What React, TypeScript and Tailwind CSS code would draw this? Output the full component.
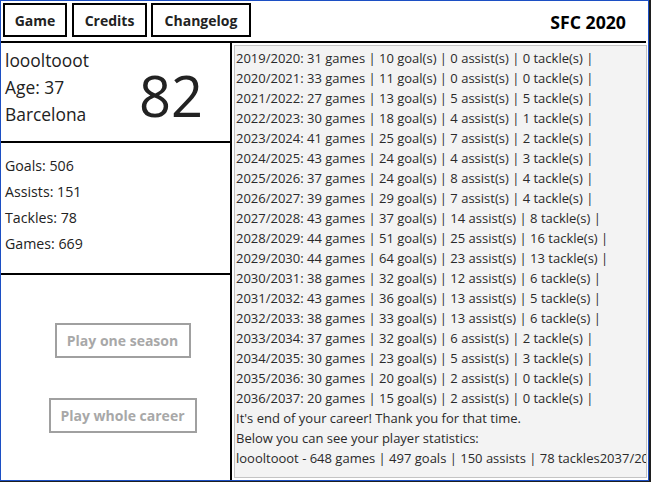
const seasons = [
  "2019/2020: 31 games | 10 goal(s) | 0 assist(s) | 0 tackle(s) |",
  "2020/2021: 33 games | 11 goal(s) | 0 assist(s) | 0 tackle(s) |",
  "2021/2022: 27 games | 13 goal(s) | 5 assist(s) | 5 tackle(s) |",
  "2022/2023: 30 games | 18 goal(s) | 4 assist(s) | 1 tackle(s) |",
  "2023/2024: 41 games | 25 goal(s) | 7 assist(s) | 2 tackle(s) |",
  "2024/2025: 43 games | 24 goal(s) | 4 assist(s) | 3 tackle(s) |",
  "2025/2026: 37 games | 24 goal(s) | 8 assist(s) | 4 tackle(s) |",
  "2026/2027: 39 games | 29 goal(s) | 7 assist(s) | 4 tackle(s) |",
  "2027/2028: 43 games | 37 goal(s) | 14 assist(s) | 8 tackle(s) |",
  "2028/2029: 44 games | 51 goal(s) | 25 assist(s) | 16 tackle(s) |",
  "2029/2030: 44 games | 64 goal(s) | 23 assist(s) | 13 tackle(s) |",
  "2030/2031: 38 games | 32 goal(s) | 12 assist(s) | 6 tackle(s) |",
  "2031/2032: 43 games | 36 goal(s) | 13 assist(s) | 5 tackle(s) |",
  "2032/2033: 38 games | 33 goal(s) | 13 assist(s) | 6 tackle(s) |",
  "2033/2034: 37 games | 32 goal(s) | 6 assist(s) | 2 tackle(s) |",
  "2034/2035: 30 games | 23 goal(s) | 5 assist(s) | 3 tackle(s) |",
  "2035/2036: 30 games | 20 goal(s) | 2 assist(s) | 0 tackle(s) |",
  "2036/2037: 20 games | 15 goal(s) | 2 assist(s) | 0 tackle(s) |",
  "It's end of your career! Thank you for that time.",
  "Below you can see your player statistics:",
  "loooltooot - 648 games | 497 goals | 150 assists | 78 tackles2037/2038: 0 games |",
];

const stats = [
  ["Goals", 506],
  ["Assists", 151],
  ["Tackles", 78],
  ["Games", 669],
];

const App = () => {
  return (
    <div
      className="w-[651px] h-[482px] bg-[#1f1f1f] overflow-hidden"
      style={{ fontFamily: "'Open Sans', 'Noto Sans', sans-serif" }}
    >
      <div className="w-[649px] h-[481px] border border-[#1c4fc4] bg-white flex flex-col">
        {/* Header */}
        <div className="h-[40px] flex items-start pl-[2px] pt-[2px] pr-[22px] shrink-0">
          <button className="w-[64px] h-[34px] border-2 border-black text-[14px] font-bold text-[#222]">
            Game
          </button>
          <button className="ml-[5px] w-[75px] h-[34px] border-2 border-black text-[14px] font-bold text-[#222]">
            Credits
          </button>
          <button className="ml-[4px] w-[100px] h-[34px] border-2 border-black text-[14px] font-bold text-[#222]">
            Changelog
          </button>
          <div className="ml-auto self-center text-[17.7px] font-bold text-black">
            SFC 2020
          </div>
        </div>
        <div className="h-[2px] bg-black mr-[2px] shrink-0" />

        {/* Body */}
        <div className="flex flex-1 min-h-0">
          <div className="w-[229px] flex flex-col shrink-0">
            <div className="h-[98px] flex items-start pl-[4px] pt-[4px] text-[#222]">
              <div className="text-[17.4px] leading-[27px]">
                <div>loooltooot</div>
                <div>Age: 37</div>
                <div>Barcelona</div>
              </div>
              <div className="ml-auto mr-[27px] mt-[15px] text-[56px] leading-[66px] text-[#222]">
                82
              </div>
            </div>
            <div className="h-[2px] bg-black" />
            <div className="h-[130px] pl-[4px] pt-[10px] text-[14.2px] leading-[26px] text-[#222]">
              {stats.map(([k, v]) => (
                <div key={k}>
                  {k}: {v}
                </div>
              ))}
            </div>
            <div className="h-[2px] bg-black" />
            <div className="flex-1 flex flex-col items-center pt-[48px] pl-[14px]">
              <button className="w-[136px] h-[35px] border-2 border-[#a0a0a0] text-[14px] font-bold text-[#a8a8a8]">
                Play one season
              </button>
              <button className="mt-[40px] w-[148px] h-[35px] border-2 border-[#a0a0a0] text-[14px] font-bold text-[#a8a8a8]">
                Play whole career
              </button>
            </div>
          </div>
          <div className="w-[2px] bg-black shrink-0" />
          <div className="flex-1 min-w-0 pl-[2px] pt-[2px] pb-[2px] pr-[1px]">
            <div className="h-full border border-[#c4c4c4] bg-[#f3f3f3] overflow-hidden pl-[1px] pt-[2px] text-[13px] leading-[20px] text-[#2a2a2a] whitespace-nowrap">
              {seasons.map((s, i) => (
                <div key={i}>{s}</div>
              ))}
            </div>
          </div>
        </div>
      </div>
    </div>
  );
};

export default App;
